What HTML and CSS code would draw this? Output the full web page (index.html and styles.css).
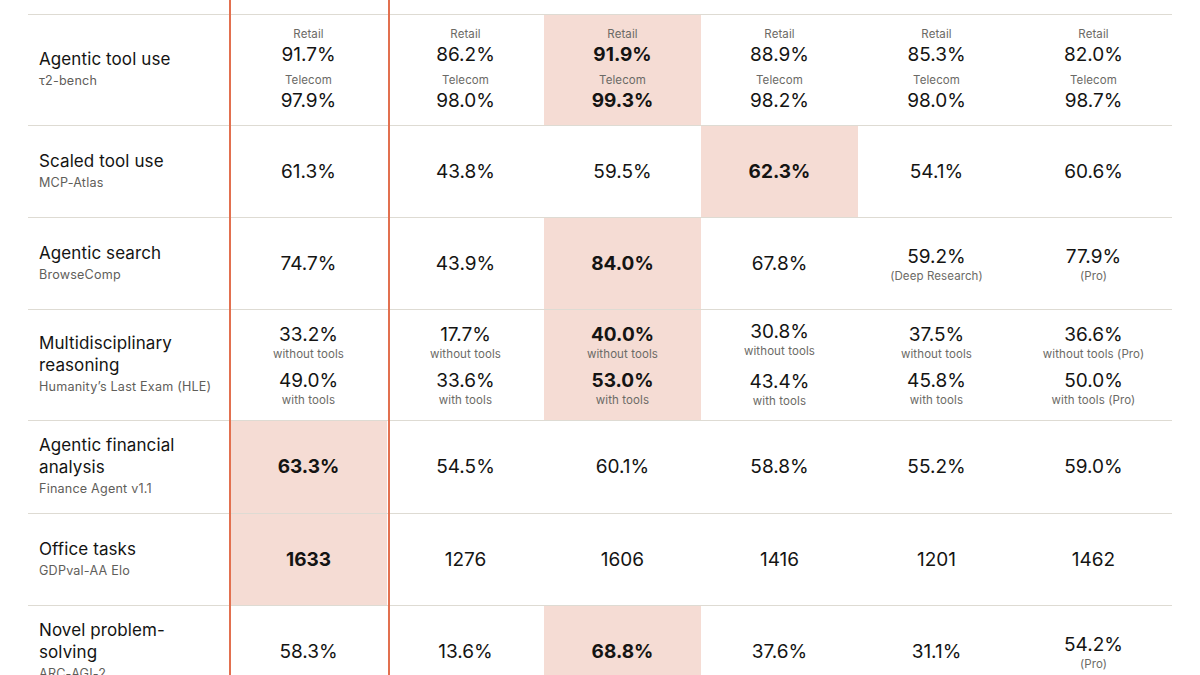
FILE: index.html
```html
<!DOCTYPE html>
<html lang="en">
<head>
<meta charset="utf-8">
<title>Benchmarks</title>
<link rel="stylesheet" href="styles.css">
</head>
<body>
<div class="table">
  <div class="spacer"><div></div><div></div><div></div><div></div><div></div><div></div><div></div></div>

  <div class="row">
    <div class="label"><div class="title">Agentic tool use</div><div class="sub">τ2-bench</div></div>
    <div class="cell top"><div class="pair"><span class="k">Retail</span><span class="v">91.7%</span></div><div class="pair"><span class="k">Telecom</span><span class="v">97.9%</span></div></div>
    <div class="cell top"><div class="pair"><span class="k">Retail</span><span class="v">86.2%</span></div><div class="pair"><span class="k">Telecom</span><span class="v">98.0%</span></div></div>
    <div class="cell top hl"><div class="pair"><span class="k">Retail</span><span class="v b">91.9%</span></div><div class="pair"><span class="k">Telecom</span><span class="v b">99.3%</span></div></div>
    <div class="cell top"><div class="pair"><span class="k">Retail</span><span class="v">88.9%</span></div><div class="pair"><span class="k">Telecom</span><span class="v">98.2%</span></div></div>
    <div class="cell top"><div class="pair"><span class="k">Retail</span><span class="v">85.3%</span></div><div class="pair"><span class="k">Telecom</span><span class="v">98.0%</span></div></div>
    <div class="cell top"><div class="pair"><span class="k">Retail</span><span class="v">82.0%</span></div><div class="pair"><span class="k">Telecom</span><span class="v">98.7%</span></div></div>
  </div>

  <div class="row">
    <div class="label"><div class="title">Scaled tool use</div><div class="sub">MCP-Atlas</div></div>
    <div class="cell"><span class="v">61.3%</span></div>
    <div class="cell"><span class="v">43.8%</span></div>
    <div class="cell"><span class="v">59.5%</span></div>
    <div class="cell hl"><span class="v b">62.3%</span></div>
    <div class="cell"><span class="v">54.1%</span></div>
    <div class="cell"><span class="v">60.6%</span></div>
  </div>

  <div class="row">
    <div class="label"><div class="title">Agentic search</div><div class="sub">BrowseComp</div></div>
    <div class="cell"><span class="v">74.7%</span></div>
    <div class="cell"><span class="v">43.9%</span></div>
    <div class="cell hl"><span class="v b">84.0%</span></div>
    <div class="cell"><span class="v">67.8%</span></div>
    <div class="cell"><div class="pair"><span class="v">59.2%</span><span class="k">(Deep Research)</span></div></div>
    <div class="cell"><div class="pair"><span class="v">77.9%</span><span class="k">(Pro)</span></div></div>
  </div>

  <div class="row">
    <div class="label"><div class="title">Multidisciplinary reasoning</div><div class="sub">Humanity’s Last Exam (HLE)</div></div>
    <div class="cell"><div class="pair"><span class="v">33.2%</span><span class="k">without tools</span></div><div class="pair"><span class="v">49.0%</span><span class="k">with tools</span></div></div>
    <div class="cell"><div class="pair"><span class="v">17.7%</span><span class="k">without tools</span></div><div class="pair"><span class="v">33.6%</span><span class="k">with tools</span></div></div>
    <div class="cell hl"><div class="pair"><span class="v b">40.0%</span><span class="k">without tools</span></div><div class="pair"><span class="v b">53.0%</span><span class="k">with tools</span></div></div>
    <div class="cell wide"><div class="pair"><span class="v">30.8%</span><span class="k">without tools</span></div><div class="pair"><span class="v">43.4%</span><span class="k">with tools</span></div></div>
    <div class="cell"><div class="pair"><span class="v">37.5%</span><span class="k">without tools</span></div><div class="pair"><span class="v">45.8%</span><span class="k">with tools</span></div></div>
    <div class="cell"><div class="pair"><span class="v">36.6%</span><span class="k">without tools (Pro)</span></div><div class="pair"><span class="v">50.0%</span><span class="k">with tools (Pro)</span></div></div>
  </div>

  <div class="row">
    <div class="label"><div class="title">Agentic financial analysis</div><div class="sub">Finance Agent v1.1</div></div>
    <div class="cell hl"><span class="v b">63.3%</span></div>
    <div class="cell"><span class="v">54.5%</span></div>
    <div class="cell"><span class="v">60.1%</span></div>
    <div class="cell"><span class="v">58.8%</span></div>
    <div class="cell"><span class="v">55.2%</span></div>
    <div class="cell"><span class="v">59.0%</span></div>
  </div>

  <div class="row">
    <div class="label"><div class="title">Office tasks</div><div class="sub">GDPval-AA Elo</div></div>
    <div class="cell hl"><span class="v b">1633</span></div>
    <div class="cell"><span class="v">1276</span></div>
    <div class="cell"><span class="v">1606</span></div>
    <div class="cell"><span class="v">1416</span></div>
    <div class="cell"><span class="v">1201</span></div>
    <div class="cell"><span class="v">1462</span></div>
  </div>

  <div class="row">
    <div class="label"><div class="title">Novel problem-solving</div><div class="sub">ARC-AGI-2</div></div>
    <div class="cell"><span class="v">58.3%</span></div>
    <div class="cell"><span class="v">13.6%</span></div>
    <div class="cell hl"><span class="v b">68.8%</span></div>
    <div class="cell"><span class="v">37.6%</span></div>
    <div class="cell"><span class="v">31.1%</span></div>
    <div class="cell"><div class="pair"><span class="v">54.2%</span><span class="k">(Pro)</span></div></div>
  </div>

  <div class="frame"></div>
</div>
</body>
</html>
```

FILE: styles.css
```css
* { box-sizing: border-box; }

html, body {
  margin: 0;
  padding: 0;
  background: #ffffff;
}

body {
  font-family: Inter, "Noto Sans", "Liberation Sans", sans-serif;
  color: #141413;
  overflow: hidden;
}

.table {
  position: relative;
  margin-left: 28px;
  width: 1144px;
}

.spacer,
.row {
  display: grid;
  grid-template-columns: 202px repeat(6, 1fr);
}

.spacer {
  height: 14px;
}

.row {
  min-height: 92px;
  border-top: 1px solid #dedbd3;
}

.label {
  display: flex;
  flex-direction: column;
  justify-content: center;
  padding: 13px 10px 13px 11px;
}

.title {
  font-size: 17px;
  line-height: 22px;
  font-weight: 400;
  color: #141413;
  letter-spacing: 0.1px;
}

.sub {
  font-size: 12.6px;
  line-height: 22px;
  color: #5f5e5a;
  letter-spacing: 0.2px;
}

.cell {
  display: flex;
  flex-direction: column;
  align-items: center;
  justify-content: center;
  gap: 8px;
  padding: 13px 0 13px;
  text-align: center;
}

.cell.top {
  gap: 6px;
  padding: 12px 0 12px;
}

.cell.top .k {
  margin-bottom: 2px;
}

.cell.wide {
  gap: 12px;
  padding: 10px 0 12px;
}

.cell.hl {
  background: #f5dcd4;
}

.pair {
  display: flex;
  flex-direction: column;
  align-items: center;
}

.v {
  font-size: 19px;
  line-height: 24px;
  font-weight: 400;
  color: #141413;
}

.v.b {
  font-weight: 700;
}

.k {
  font-size: 11.5px;
  line-height: 14px;
  color: #6b6a66;
  letter-spacing: 0.1px;
}

.frame {
  position: absolute;
  top: 0;
  bottom: 0;
  left: 201px;
  width: 161px;
  border-left: 2px solid #e2704f;
  border-right: 2px solid #e2704f;
  pointer-events: none;
}
```
